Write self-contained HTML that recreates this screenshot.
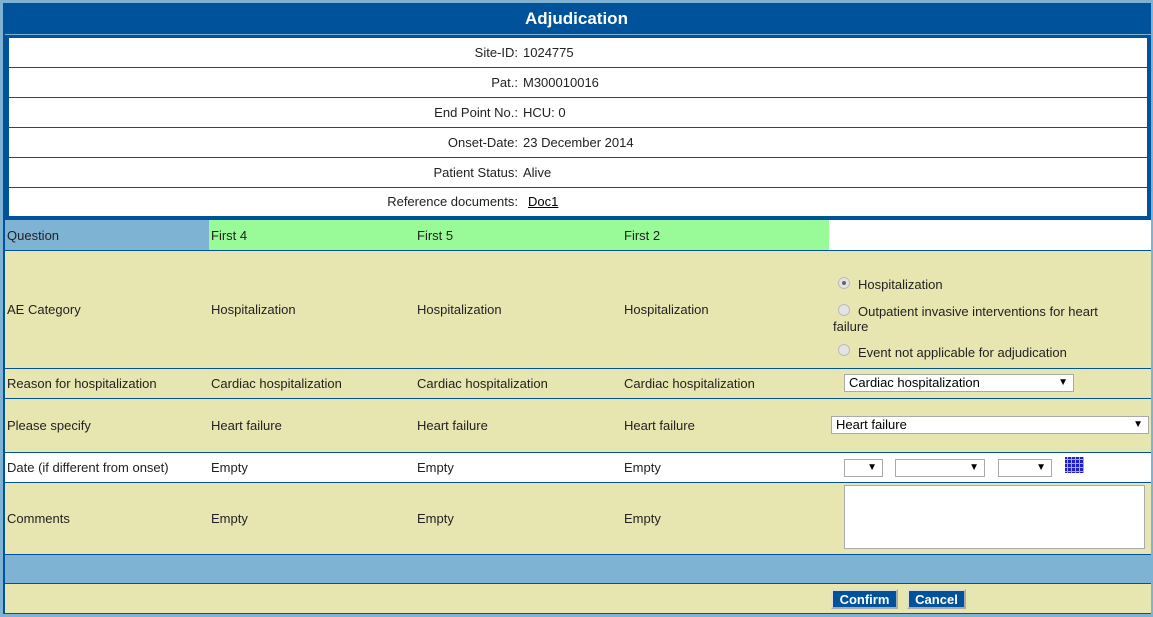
<!DOCTYPE html>
<html><head><meta charset="utf-8"><style>
*{margin:0;padding:0;box-sizing:border-box}
body{width:1153px;height:617px;background:#7fb3d3;position:relative;overflow:hidden;font-family:"Liberation Sans",Arial,sans-serif;font-size:13px;color:#222}
.a{position:absolute}
.t{position:absolute;white-space:nowrap}
.hl{position:absolute;left:5px;width:1146px;height:1px;background:#00529b}
.sel{position:absolute;background:#fff;border:1px solid #aaa;height:18px;font-size:13px;line-height:16px;padding-left:4px;color:#000}
.sel:after{content:"▼";position:absolute;right:5px;top:0;font-size:10px}
.rad{position:absolute;width:12px;height:12px;border-radius:50%;border:1px solid #bbb;background:#e4e4e4}
.btn{position:absolute;background:#00529b;color:#fff;font-weight:bold;font-size:13px;text-align:center;line-height:17px;height:20px;border:2px solid #aaa;border-top-color:#ddd;border-left-color:#ddd}
</style></head><body>
<div class="a" style="left:3px;top:3px;width:1148px;height:611px;background:#00529b"></div>
<div class="t" style="left:0;width:1153px;top:9px;text-align:center;color:#fff;font-weight:bold;font-size:17px">Adjudication</div>
<div class="a" style="left:5px;top:34px;width:1146px;height:1px;background:#7fb3d3"></div>
<div class="a" style="left:6px;top:35px;width:1144px;height:184px;background:#00529b"></div>
<div class="a" style="left:9px;top:38px;width:1138px;height:178px;background:#fff"></div>
<div class="a" style="left:9px;top:67px;width:1138px;height:1px;background:#00529b"></div>
<div class="a" style="left:9px;top:97px;width:1138px;height:1px;background:#00529b"></div>
<div class="a" style="left:9px;top:127px;width:1138px;height:1px;background:#00529b"></div>
<div class="a" style="left:9px;top:157px;width:1138px;height:1px;background:#00529b"></div>
<div class="a" style="left:9px;top:187px;width:1138px;height:1px;background:#00529b"></div>
<div class="t" style="right:635px;top:45px">Site-ID:</div><div class="t" style="left:523px;top:45px">1024775</div>
<div class="t" style="right:635px;top:75px">Pat.:</div><div class="t" style="left:523px;top:75px">M300010016</div>
<div class="t" style="right:635px;top:105px">End Point No.:</div><div class="t" style="left:523px;top:105px">HCU: 0</div>
<div class="t" style="right:635px;top:135px">Onset-Date:</div><div class="t" style="left:523px;top:135px">23 December 2014</div>
<div class="t" style="right:635px;top:165px">Patient Status:</div><div class="t" style="left:523px;top:165px">Alive</div>
<div class="t" style="right:635px;top:194px">Reference documents:</div><div class="t" style="left:528px;top:194px;text-decoration:underline;color:#000">Doc1</div>

<div class="a" style="left:5px;top:220px;width:204px;height:30px;background:#7fb3d3"></div>
<div class="a" style="left:209px;top:220px;width:620px;height:30px;background:#98fb98"></div>
<div class="a" style="left:829px;top:220px;width:322px;height:30px;background:#fff"></div>
<div class="a" style="left:5px;top:251px;width:1146px;height:202px;background:#e8e6b0"></div>
<div class="a" style="left:5px;top:453px;width:1146px;height:30px;background:#fff"></div>
<div class="a" style="left:5px;top:483px;width:1146px;height:72px;background:#e8e6b0"></div>
<div class="a" style="left:5px;top:555px;width:1146px;height:29px;background:#7fb3d3"></div>
<div class="a" style="left:5px;top:584px;width:1146px;height:29px;background:#e8e6b0"></div>
<div class="hl" style="top:250px"></div><div class="hl" style="top:368px"></div><div class="hl" style="top:398px"></div>
<div class="hl" style="top:452px"></div><div class="hl" style="top:482px"></div><div class="hl" style="top:554px"></div><div class="hl" style="top:583px"></div>

<div class="t" style="left:7px;top:228px">Question</div><div class="t" style="left:211px;top:228px">First 4</div><div class="t" style="left:417px;top:228px">First 5</div><div class="t" style="left:624px;top:228px">First 2</div>
<div class="t" style="left:7px;top:302px">AE Category</div><div class="t" style="left:211px;top:302px">Hospitalization</div><div class="t" style="left:417px;top:302px">Hospitalization</div><div class="t" style="left:624px;top:302px">Hospitalization</div>
<div class="rad" style="left:838px;top:277px"><div class="a" style="left:3px;top:3px;width:4px;height:4px;border-radius:50%;background:#666"></div></div>
<div class="t" style="left:858px;top:277px">Hospitalization</div>
<div class="rad" style="left:838px;top:304px"></div>
<div class="t" style="left:858px;top:304px">Outpatient invasive interventions for heart</div>
<div class="t" style="left:833px;top:319px">failure</div>
<div class="rad" style="left:838px;top:344px"></div>
<div class="t" style="left:858px;top:345px">Event not applicable for adjudication</div>
<div class="t" style="left:7px;top:376px">Reason for hospitalization</div><div class="t" style="left:211px;top:376px">Cardiac hospitalization</div><div class="t" style="left:417px;top:376px">Cardiac hospitalization</div><div class="t" style="left:624px;top:376px">Cardiac hospitalization</div>
<div class="sel" style="left:844px;top:374px;width:230px">Cardiac hospitalization</div>
<div class="t" style="left:7px;top:418px">Please specify</div><div class="t" style="left:211px;top:418px">Heart failure</div><div class="t" style="left:417px;top:418px">Heart failure</div><div class="t" style="left:624px;top:418px">Heart failure</div>
<div class="sel" style="left:831px;top:416px;width:318px">Heart failure</div>
<div class="t" style="left:7px;top:460px">Date (if different from onset)</div><div class="t" style="left:211px;top:460px">Empty</div><div class="t" style="left:417px;top:460px">Empty</div><div class="t" style="left:624px;top:460px">Empty</div>
<div class="sel" style="left:844px;top:459px;width:39px"></div>
<div class="sel" style="left:895px;top:459px;width:90px"></div>
<div class="sel" style="left:998px;top:459px;width:54px"></div>
<div class="a" style="left:1065px;top:457px;width:19px;height:16px;background:#2020c0;background-image:linear-gradient(90deg,transparent 2px,#aad 2px,#aad 3px,transparent 3px),linear-gradient(transparent 2px,#aad 2px,#aad 3px,transparent 3px);background-size:4px 4px"></div>
<div class="t" style="left:7px;top:511px">Comments</div><div class="t" style="left:211px;top:511px">Empty</div><div class="t" style="left:417px;top:511px">Empty</div><div class="t" style="left:624px;top:511px">Empty</div>
<div class="a" style="left:844px;top:485px;width:301px;height:64px;background:#fff;border:1px solid #aaa"></div>
<div class="btn" style="left:831px;top:589px;width:67px">Confirm</div>
<div class="btn" style="left:907px;top:589px;width:59px">Cancel</div>
</body></html>
